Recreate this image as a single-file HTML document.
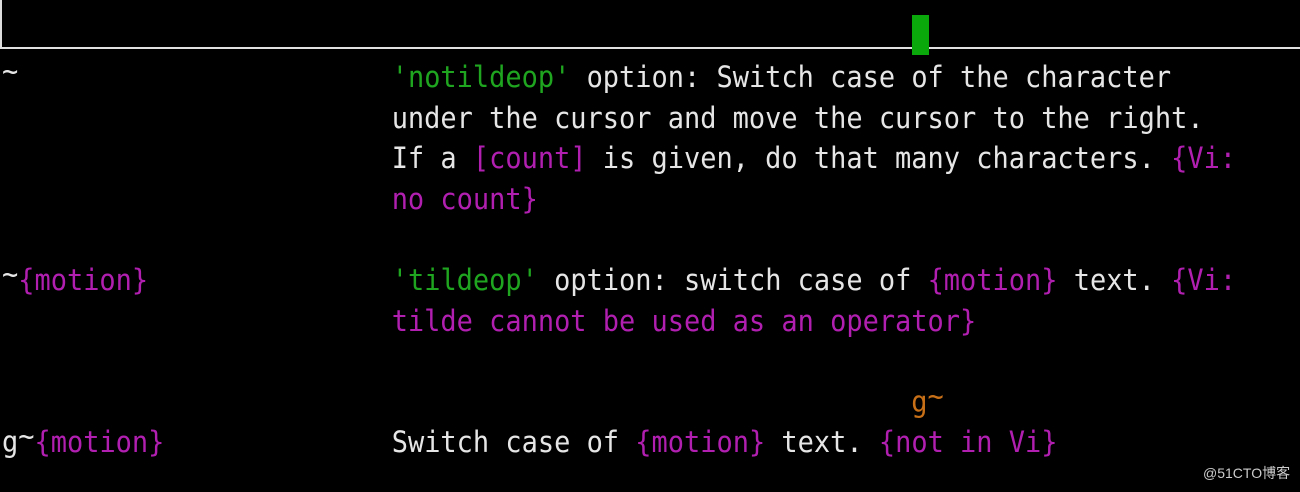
<!DOCTYPE html>
<html><head><meta charset="utf-8"><style>
html,body{margin:0;padding:0;background:#000;width:1300px;height:492px;overflow:hidden;position:relative}
.t{position:absolute;left:2px;font-family:"DejaVu Sans Mono","Liberation Mono",monospace;font-size:29px;line-height:40.6px;color:#e6e6e6;white-space:pre;transform:scaleX(0.93);transform-origin:0 0}
.g{color:#1fa51f}.m{color:#b01fb0}.o{color:#c87018}
.s{position:relative;top:-6px}
</style></head><body>
<div style="position:absolute;left:0;top:0;width:2px;height:48px;background:#ddd"></div>
<div style="position:absolute;left:0;top:47px;width:1300px;height:2px;background:#e0e0e0"></div>
<div style="position:absolute;left:912px;top:15px;width:17px;height:40px;background:#0aa80a"></div>
<div class="t" style="top:57px"><span class="s">~</span>                       <span class="g">'notildeop'</span> option: Switch case of the character
                        under the cursor and move the cursor to the right.
                        If a <span class="m">[count]</span> is given, do that many characters. <span class="m">{Vi:</span>
                        <span class="m">no count}</span>

<span class="s">~</span><span class="m">{motion}</span>               <span class="g">'tildeop'</span> option: switch case of <span class="m">{motion}</span> text. <span class="m">{Vi:</span>
                        <span class="m">tilde cannot be used as an operator}</span>

                                                        <span class="o">g<span class="s">~</span></span>
g<span class="s">~</span><span class="m">{motion}</span>              Switch case of <span class="m">{motion}</span> text. <span class="m">{not in Vi}</span></div>
<div style="position:absolute;left:1203px;top:463px;font-family:'Liberation Sans','Noto Sans CJK SC',sans-serif;font-size:14px;color:#ccc">@51CTO博客</div>
</body></html>
